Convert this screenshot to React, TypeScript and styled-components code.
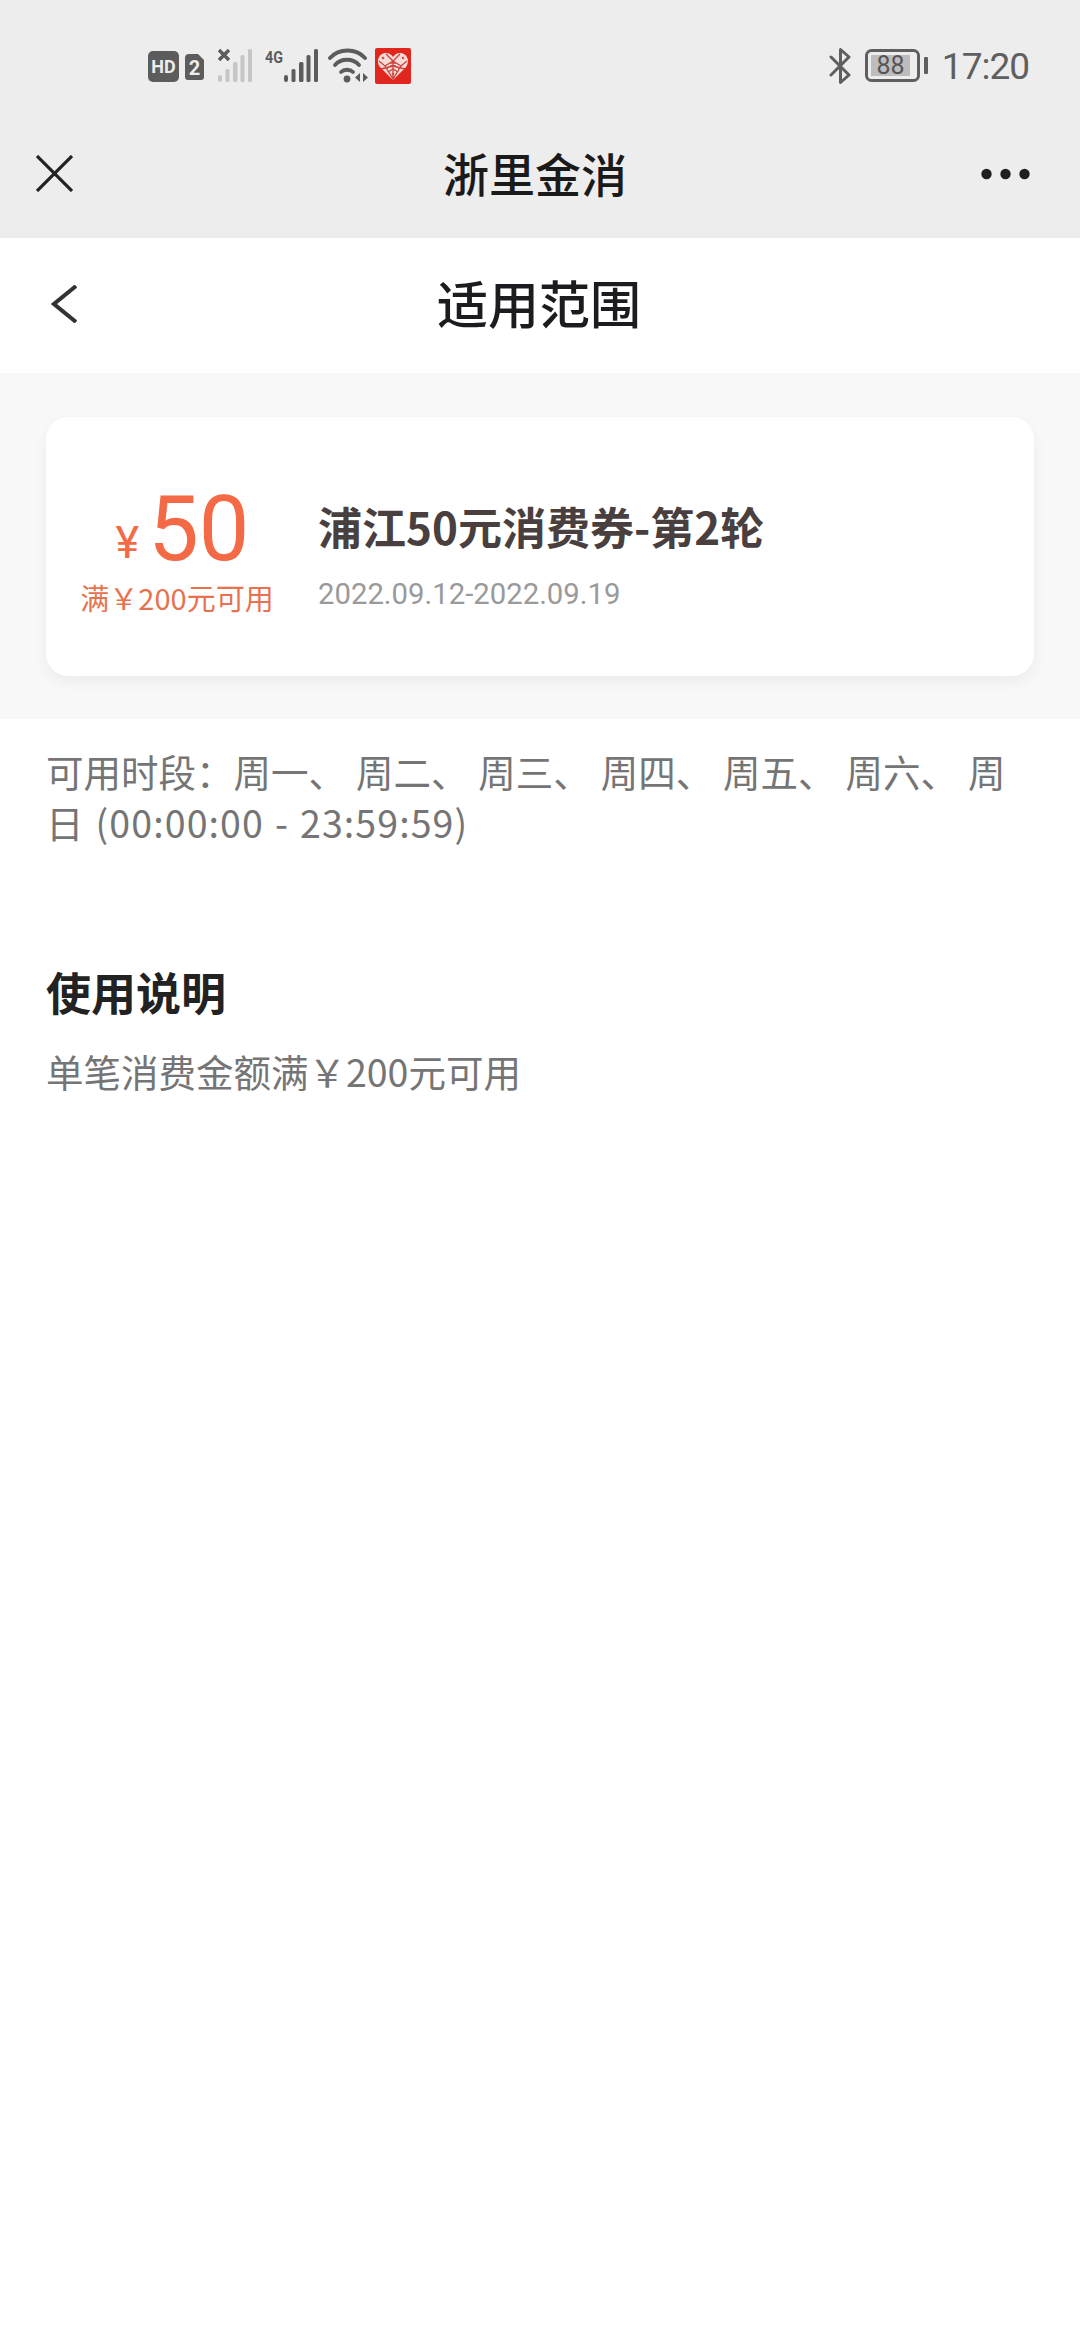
import React from 'react';
import styled, { createGlobalStyle } from 'styled-components';

const CJK = '"Noto Sans CJK SC", "Noto Sans", sans-serif';
const LATIN = 'Roboto, "Noto Sans CJK SC", sans-serif';

const GlobalStyle = createGlobalStyle`
  html, body {
    margin: 0;
    padding: 0;
    background: #ffffff;
  }
  * {
    box-sizing: border-box;
  }
`;

const Page = styled.div`
  width: 1080px;
  height: 2340px;
  background: #ffffff;
  font-family: ${CJK};
  overflow: hidden;
`;

const TopArea = styled.div`
  height: 238px;
  background: #ededed;
`;

const StatusBar = styled.div`
  height: 132px;
  display: flex;
  align-items: center;
  justify-content: space-between;
  padding: 0 51px 0 148px;
`;

const StatusGroup = styled.div`
  display: flex;
  align-items: center;
`;

const StatusIcon = styled.svg<{ $gap?: number }>`
  display: block;
  flex: none;
  margin-left: ${(p) => p.$gap ?? 0}px;
`;

const Clock = styled.span`
  margin-left: 14px;
  font-family: ${LATIN};
  font-size: 37px;
  letter-spacing: -1px;
  color: #5f5f5f;
`;

const WebNav = styled.div`
  height: 106px;
  position: relative;
  display: flex;
  align-items: flex-start;
  justify-content: space-between;
  padding: 23px 50px 0 36px;
`;

const WebTitle = styled.div`
  position: absolute;
  left: 443px;
  top: 2px;
  font-size: 46px;
  line-height: 76px;
  font-weight: 500;
  color: #1a1a1a;
`;

const PageHeader = styled.div`
  height: 135px;
  position: relative;
  display: flex;
  align-items: center;
  padding-left: 51px;
  padding-bottom: 3px;
`;

const PageTitle = styled.div`
  position: absolute;
  left: 437px;
  top: 28px;
  font-size: 51px;
  line-height: 72px;
  font-weight: 500;
  color: #1c1c20;
`;

const CouponBand = styled.div`
  height: 346px;
  background: #f8f8f8;
  padding: 44px 46px 0;
`;

const CouponCard = styled.div`
  height: 259px;
  background: #ffffff;
  border-radius: 22px;
  box-shadow: 0 6px 14px rgba(0, 0, 0, 0.05);
  display: flex;
  align-items: flex-start;
`;

const PriceColumn = styled.div`
  width: 262px;
  margin-right: 10px;
  display: flex;
  flex-direction: column;
  align-items: center;
  padding-top: 69px;
  color: #f46a46;
`;

const PriceRow = styled.div`
  display: flex;
  align-items: baseline;
  height: 88px;
  line-height: 88px;
  margin-left: 11px;
`;

const Yen = styled.span`
  font-size: 45px;
  margin-right: 9px;
  font-family: ${LATIN};
  font-weight: 400;
  position: relative;
  top: -2px;
`;

const Amount = styled.span`
  font-family: ${LATIN};
  font-size: 90px;
`;

const Threshold = styled.div`
  margin-top: 3px;
  font-size: 29px;
  line-height: 40px;
  color: #e8724f;
  white-space: nowrap;
`;

const CouponInfo = styled.div`
  padding-top: 79px;
`;

const CouponName = styled.div`
  font-size: 44px;
  line-height: 60px;
  font-weight: 700;
  color: #4a3f3f;
  white-space: nowrap;
`;

const CouponDate = styled.div`
  margin-top: 17px;
  font-family: ${LATIN};
  font-size: 29.3px;
  line-height: 42px;
  color: #9a9a9a;
`;

const Content = styled.div`
  padding: 26px 46px 0;
`;

const Paragraph = styled.p`
  margin: 0;
  font-size: 37.5px;
  line-height: 51px;
  word-spacing: 1.5px;
  color: #757575;
`;

const TimeRange = styled.span`
  letter-spacing: 1.1px;
`;

const SectionTitle = styled.h2`
  margin: 113px 0 0;
  font-size: 45px;
  line-height: 64px;
  font-weight: 700;
  color: #222222;
`;

const Note = styled.p`
  margin: 21px 0 0;
  font-size: 37.5px;
  line-height: 51px;
  color: #757575;
`;

const BarSet = ({ x, color }: { x: number; color: string }) => (
  <g fill={color}>
    <rect x={x} y="27" width="4" height="7" rx="2" />
    <rect x={x + 7.5} y="21" width="4" height="13" rx="1.5" />
    <rect x={x + 15} y="14" width="4.5" height="20" rx="1.5" />
    <rect x={x + 22.5} y="7" width="4" height="27" rx="1.5" />
    <rect x={x + 30} y="1" width="4" height="33" rx="1.5" />
  </g>
);

const HdIcon = () => (
  <StatusIcon width="56" height="36" viewBox="0 0 56 36">
    <rect x="0" y="3" width="31" height="31" rx="5" fill="#5c5c5c" />
    <text x="15.5" y="25" textAnchor="middle" fontFamily="Roboto, sans-serif" fontWeight="700" fontSize="18" fill="#ededed">HD</text>
    <path d="M41 6h9l6 6v17a3 3 0 0 1-3 3H40a3 3 0 0 1-3-3V10a4 4 0 0 1 4-4z" fill="#5c5c5c" />
    <text x="46.5" y="27" textAnchor="middle" fontFamily="Roboto, sans-serif" fontWeight="700" fontSize="20" fill="#ededed">2</text>
  </StatusIcon>
);

const SignalOff = () => (
  <StatusIcon $gap={14} width="35" height="36" viewBox="0 0 35 36">
    <BarSet x={0} color="#c6c6c6" />
    <path d="M1 2l10 10M11 2L1 12" stroke="#5c5c5c" strokeWidth="3.4" />
  </StatusIcon>
);

const Signal4G = () => (
  <StatusIcon $gap={12} width="53" height="36" viewBox="0 0 53 36">
    <text x="0" y="15" fontFamily="Roboto, sans-serif" fontWeight="700" fontSize="17" fill="#5c5c5c" textLength="18" lengthAdjust="spacingAndGlyphs">4G</text>
    <BarSet x={19} color="#5c5c5c" />
  </StatusIcon>
);

const WifiIcon = () => (
  <StatusIcon $gap={10} width="40" height="36" viewBox="0 0 40 36">
    <g fill="none" stroke="#5c5c5c" strokeWidth="3.8" strokeLinecap="round">
      <path d="M2 10C11 0 28 0 37 10" />
      <path d="M7 17C13 10 25 10 31 17" />
      <path d="M13 24c3-3 9-3 12 0" />
    </g>
    <circle cx="19" cy="31" r="3.4" fill="#5c5c5c" />
    <path d="M32 25v9l-5-4.5zM35 25v9l5-4.5z" fill="#5c5c5c" />
  </StatusIcon>
);

const PddLogo = () => (
  <StatusIcon $gap={7} width="36" height="36" viewBox="0 0 36 36">
    <rect width="36" height="36" rx="2" fill="#e0261d" />
    <path d="M18 32L5 19C0 12 5 5 11 5c3 0 5 1.5 7 4 2-2.5 4-4 7-4 6 0 11 7 6 14z" fill="#f6dcd8" />
    <g stroke="#c9443c" strokeWidth="1.3" fill="none">
      <path d="M11 6l7 7 7-7M4 13l6 5 8-5 8 5 6-5M10 18l8 13 8-13M18 13v18M6 21l12-3 12 3" />
      <path d="M15 15h6M15 18h6M13 24l5-3 5 3" />
    </g>
    <g fill="#d84a40">
      <circle cx="8" cy="10" r="1.3" />
      <circle cx="28" cy="10" r="1.3" />
      <circle cx="18" cy="26" r="1.3" />
      <circle cx="12" cy="20" r="1.1" />
      <circle cx="24" cy="20" r="1.1" />
    </g>
  </StatusIcon>
);

const BluetoothIcon = () => (
  <StatusIcon width="22" height="36" viewBox="0 0 22 36">
    <path d="M2 9l18 18-8.5 7.5V1.5L20 9 2 27" fill="none" stroke="#5f5f5f" strokeWidth="3" strokeLinejoin="round" strokeLinecap="round" />
  </StatusIcon>
);

const BatteryIcon = () => (
  <StatusIcon $gap={14} width="63" height="34" viewBox="0 0 63 34">
    <rect x="1.5" y="1.5" width="52" height="30" rx="5" fill="none" stroke="#5f5f5f" strokeWidth="3" />
    <rect x="6" y="6" width="39" height="21" fill="#bdbdbd" />
    <text x="25.5" y="25" textAnchor="middle" fontFamily="Roboto, sans-serif" fontSize="25" fill="#555555">88</text>
    <rect x="59" y="8" width="4" height="17" rx="1" fill="#5f5f5f" />
  </StatusIcon>
);

const CloseIcon = () => (
  <svg width="37" height="37" viewBox="0 0 37 37">
    <path d="M1 1l35 35M36 1L1 36" stroke="#222222" strokeWidth="3.2" fill="none" />
  </svg>
);

const MoreIcon = () => (
  <svg width="49" height="12" viewBox="0 0 49 12" style={{ marginTop: 13 }}>
    <circle cx="5.5" cy="6" r="5.2" fill="#1f1f1f" />
    <circle cx="24.5" cy="6" r="5.2" fill="#1f1f1f" />
    <circle cx="43.5" cy="6" r="5.2" fill="#1f1f1f" />
  </svg>
);

const BackIcon = () => (
  <svg width="26" height="38" viewBox="0 0 26 38">
    <path d="M25 1L3 19l22 18" stroke="#333333" strokeWidth="4" fill="none" />
  </svg>
);

export default function App() {
  return (
    <Page>
      <GlobalStyle />
      <TopArea>
        <StatusBar>
          <StatusGroup>
            <HdIcon />
            <SignalOff />
            <Signal4G />
            <WifiIcon />
            <PddLogo />
          </StatusGroup>
          <StatusGroup>
            <BluetoothIcon />
            <BatteryIcon />
            <Clock>17:20</Clock>
          </StatusGroup>
        </StatusBar>
        <WebNav>
          <CloseIcon />
          <WebTitle>浙里金消</WebTitle>
          <MoreIcon />
        </WebNav>
      </TopArea>
      <PageHeader>
        <BackIcon />
        <PageTitle>适用范围</PageTitle>
      </PageHeader>
      <CouponBand>
        <CouponCard>
          <PriceColumn>
            <PriceRow>
              <Yen>¥</Yen>
              <Amount>50</Amount>
            </PriceRow>
            <Threshold>满￥200元可用</Threshold>
          </PriceColumn>
          <CouponInfo>
            <CouponName>浦江50元消费券-第2轮</CouponName>
            <CouponDate>2022.09.12-2022.09.19</CouponDate>
          </CouponInfo>
        </CouponCard>
      </CouponBand>
      <Content>
        <Paragraph>
          可用时段：周一、 周二、 周三、 周四、 周五、 周六、 周<TimeRange>日 (00:00:00 - 23:59:59)</TimeRange>
        </Paragraph>
        <SectionTitle>使用说明</SectionTitle>
        <Note>单笔消费金额满￥200元可用</Note>
      </Content>
    </Page>
  );
}
